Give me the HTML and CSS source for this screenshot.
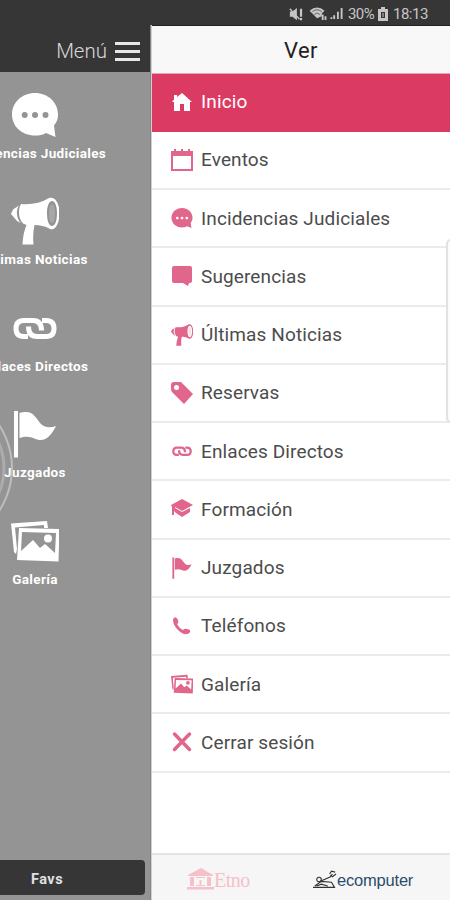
FILE: index.html
```html
<!DOCTYPE html>
<html lang="es">
<head>
<meta charset="utf-8">
<title>Menú</title>
<link rel="stylesheet" href="styles.css">
</head>
<body>
<svg class="sprite" aria-hidden="true">
  <symbol id="chat" viewBox="0 0 48 48"><path fill-rule="evenodd" d="M24 2C11 2 1 11.500 1 23.500S11 44.500 24 44.500C28 44.500 32 44 35 42L44.500 46L43 34.500C46 31 47 27.500 47 23.500C47 11.500 37 2 24 2ZM13.700 21a3 3 0 1 1 0 6a3 3 0 1 1 0-6ZM24 21a3 3 0 1 1 0 6a3 3 0 1 1 0-6ZM34.500 21a3 3 0 1 1 0 6a3 3 0 1 1 0-6Z"/></symbol>
  <symbol id="horn" viewBox="0 0 48 48"><path fill-rule="evenodd" d="M8 8.500C5 13 5 20 9.500 26L6 24L0 17L2 12.500ZM10 7C20 8 30 6 38 1C44-1 48.500 6 48.500 16C48.500 27 44 34 39 32C34 29 29 28 23.500 28Q21.500 37 22.500 47.500H11.500Q12 36 15.500 28L12 26.500C7 21 7 12 10 7ZM41 4C38 4 36 9 36 16C36 24 38 29 41 29C44 29 46 24 46 16C46 9 44 4 41 4Z"/><ellipse cx="41" cy="16.500" rx="3" ry="9.500" opacity=".18"/></symbol>
  <symbol id="link" viewBox="0 0 48 48"><g fill="none" stroke="currentColor" stroke-width="5"><path d="M17 32.500H13Q5 32.500 5 24.500Q5 16.500 13 16.500H22Q30.500 16.500 30.500 26.500"/><path d="M31 16.500H35Q43 16.500 43 24.500Q43 32.500 35 32.500H26Q17.500 32.500 17.500 22.500"/></g></symbol>
  <symbol id="flag" viewBox="0 0 48 48"><path d="M3 1H7V47.500H3ZM8.500 3C22-1 24 7 30 14C34 18 40 18 45 16C41 24 36 31 28 30C21 28 17 25 8.500 28Z"/></symbol>
  <symbol id="gallery" viewBox="0 0 48 48"><path fill-rule="evenodd" d="M0 6.500L36 4L37 11H33V8L4 10.500L6 32L5 37L3 35ZM8 11L48.500 12L47.500 44.500L6 43ZM11 15L10 34L22 23L29 31L34 27L44 36L45 16Z"/><circle cx="37" cy="21.500" r="4"/></symbol>
  <symbol id="home" viewBox="0 0 22 22"><path d="M1 11L3 8.500V4H6V6L11 2L21 11H19V20H13V13H9V20H3V11Z"/></symbol>
  <symbol id="calendar" viewBox="0 0 22 22"><path fill-rule="evenodd" d="M0 2H3V0H5V2H10V0H12V2H17V0H19V2H22V22H0ZM2 7V20H20V7Z"/></symbol>
  <symbol id="comment" viewBox="0 0 22 22"><path d="M3 1H19Q21 1 21 3V16Q21 18 19 18H18L17 21L12 18H3Q1 18 1 16V3Q1 1 3 1Z"/></symbol>
  <symbol id="tag" viewBox="0 0 22 22"><path fill-rule="evenodd" d="M3 0H10L22 12L13 22L1 10Q0 9 0 7V3Q0 0 3 0ZM5.500 3a2.500 2.500 0 1 0 0 5a2.500 2.500 0 1 0 0-5Z"/></symbol>
  <symbol id="cap" viewBox="0 0 22 22"><path d="M0 7L11 1L22 7L11 13L4 9V10L11 14L19 10V14L11 19L5 15L3 13V17H1V9Z"/></symbol>
  <symbol id="phone" viewBox="0 0 22 22"><path d="M3 3Q5 1 7 5Q8 8 6 9Q8 13 12 15Q14 13 16 14L19 15Q20 18 16 19Q12 20 7 15Q2 10 2 5Q2 4 3 3Z"/></symbol>
  <symbol id="cross" viewBox="0 0 22 22"><path d="M3.500 3L18.500 18.500M18.500 3L3.500 18.500" fill="none" stroke="currentColor" stroke-width="3.500" stroke-linecap="round"/></symbol>
</svg>
<div class="phone">
  <header class="status">
    <svg class="status-icon mute" viewBox="0 0 16 16"><path d="M1 5H4L9 1V15L4 11H1Z"/><path d="M1 2L12 14" stroke="currentColor" stroke-width="1.500"/><path d="M12.500 2H15V11H12.500ZM12.500 12.500H15V15H12.500Z"/></svg>
    <svg class="status-icon wifi" viewBox="0 0 18 16"><path d="M0 5Q8-2 16 5L13 8V11L8 13Z"/><path d="M3 6Q8 2 13 6M5 9Q8 6 11 9" fill="none" stroke="#363636" stroke-width=".7"/><path d="M13 9H15V15H13ZM16 11H18V15H16Z"/></svg>
    <svg class="status-icon signal" viewBox="0 0 13 14"><path d="M0 11H2V13H0ZM3 9H5V13H3ZM7 5H9V13H7ZM11 1H13V13H11Z"/></svg>
    <span class="percent">30%</span>
    <svg class="status-icon battery" viewBox="0 0 10 14"><path fill-rule="evenodd" d="M3 0H7V2H10V14H0V2H3ZM3 5V11H7V5Z"/><path d="M4.500 6H5.500V10H4.500Z"/></svg>
    <span class="clock">18:13</span>
  </header>
  <div class="body">
    <section class="home-page">
      <div class="home-bar"><span>Menú</span><span class="burger"><i></i><i></i><i></i></span></div>
      <div class="tiles">
        <div class="tile"><svg><use href="#chat"/></svg><span>Incidencias Judiciales</span></div>
        <div class="tile"><svg><use href="#horn"/></svg><span>Últimas Noticias</span></div>
        <div class="tile"><svg><use href="#link"/></svg><span>Enlaces Directos</span></div>
        <div class="tile"><svg><use href="#flag"/></svg><span>Juzgados</span></div>
        <div class="tile"><svg><use href="#gallery"/></svg><span>Galería</span></div>
      </div>
      <div class="favs"><span>Favs</span></div>
      <svg class="ripple" viewBox="0 0 14 90"><circle cx="-66" cy="45" r="78" stroke-width="2"/><circle cx="-57" cy="45" r="61" stroke-width="3" opacity=".6"/></svg>
    </section>
    <nav class="drawer">
      <h1 class="drawer-title">Ver</h1>
      <ul class="menu">
        <li class="active"><svg><use href="#home"/></svg><span>Inicio</span></li>
        <li><svg><use href="#calendar"/></svg><span>Eventos</span></li>
        <li><svg><use href="#chat"/></svg><span>Incidencias Judiciales</span></li>
        <li><svg><use href="#comment"/></svg><span>Sugerencias</span></li>
        <li><svg><use href="#horn"/></svg><span>Últimas Noticias</span></li>
        <li><svg><use href="#tag"/></svg><span>Reservas</span></li>
        <li><svg><use href="#link"/></svg><span>Enlaces Directos</span></li>
        <li><svg><use href="#cap"/></svg><span>Formación</span></li>
        <li><svg><use href="#flag"/></svg><span>Juzgados</span></li>
        <li><svg><use href="#phone"/></svg><span>Teléfonos</span></li>
        <li><svg><use href="#gallery"/></svg><span>Galería</span></li>
        <li><svg><use href="#cross"/></svg><span>Cerrar sesión</span></li>
      </ul>
      <footer class="brands">
        <div class="etno"><svg viewBox="0 0 27 22"><path fill-rule="evenodd" d="M1 7L14 0L26 7V8H1ZM3 9H7V18H3ZM20 9H24V18H20ZM9 9H18V10H9ZM9 17H18V18H9ZM12.500 12H14.500V17H12.500ZM0 19H27V21.500H0Z"/></svg><span>Etno</span></div>
        <div class="ecomputer"><svg viewBox="0 0 26 20"><g fill="none" stroke="#333" stroke-width="1.200"><path d="M0 18.500H24M2 17L9 12L20 13L23 18M4 17L9 15L16 17M8 12L19 7L21 4"/><circle cx="6.500" cy="10" r="2.500"/><path d="M18 4L20 1L24 2M19 5L21 7L25 4"/></g></svg><span>ecomputer</span></div>
      </footer>
      <div class="edge-handle"></div>
    </nav>
  </div>
</div>
</body>
</html>
```
FILE: styles.css
```css
* { box-sizing: border-box; }
body { margin: 0; font-family: Roboto, "Liberation Sans", sans-serif; }
svg { display: block; fill: currentColor; flex: none; }
.sprite { position: absolute; width: 0; height: 0; }
.phone { width: 450px; height: 900px; display: flex; flex-direction: column; overflow: hidden; background: #363636; }
.status { height: 25px; flex: none; display: flex; align-items: center; justify-content: flex-end; padding: 2px 22px 0 0; color: #c6c6c6; font-size: 15px; }
.mute { width: 16px; height: 14px; margin-right: 5px; }
.wifi { width: 18px; height: 15px; margin-right: 3px; }
.signal { width: 13px; height: 13px; margin-right: 5px; }
.battery { width: 10px; height: 14px; margin: 0 5px 0 4px; }
.percent { width: 26px; letter-spacing: -0.6px; }
.clock { width: 35px; letter-spacing: -0.5px; }
.body { flex: 1; min-height: 0; display: flex; }
.home-page { position: relative; width: 151px; flex: none; display: flex; flex-direction: column; overflow: hidden; background: #949494; border-right: 1px solid #858585; }
.home-bar { height: 47px; flex: none; display: flex; align-items: center; justify-content: flex-end; gap: 8px; padding: 5px 10px 0 0; background: #363636; color: #d8d8d8; font-size: 20.5px; font-weight: 300; }
.burger { width: 25px; display: flex; flex-direction: column; gap: 5px; }
.burger i { height: 3px; background: #e8e8e8; }
.tiles { flex: 1; padding-top: 19px; color: #fff; }
.tile { width: 70px; height: 106.4px; display: flex; flex-direction: column; align-items: center; gap: 6px; font-size: 13.5px; line-height: 16px; font-weight: 700; letter-spacing: 0.35px; white-space: nowrap; }
.tile svg { width: 48px; height: 48px; overflow: visible; }
.favs { width: 145px; height: 35px; flex: none; margin-bottom: 5px; display: flex; align-items: center; padding: 3px 0 0 31px; background: #363636; border-radius: 0 4px 4px 0; color: #e0e0e0; font-size: 14.5px; font-weight: 700; letter-spacing: 0.5px; }
.ripple { position: absolute; left: 0; top: 398px; width: 14px; height: 90px; }
.ripple circle { fill: none; stroke: #bdbdbd; }
.drawer { position: relative; flex: 1; display: flex; flex-direction: column; border-left: 1px solid #d0d0d0; background: #fff; }
.drawer-title { height: 48.5px; flex: none; margin: 0; display: flex; align-items: center; justify-content: center; padding-top: 3px; background: #f8f8f8; border-top: 1px solid #222; border-bottom: 1px solid #e1a7b5; color: #222; font-size: 22px; font-weight: 400; letter-spacing: 0.4px; }
.menu { flex: 1; margin: 0; padding: 0; list-style: none; }
.menu li { height: 58.25px; display: flex; align-items: center; gap: 8px; padding-left: 19px; border-bottom: 2px solid #ebebeb; color: #e0668c; }
.menu svg { width: 22px; height: 22px; overflow: visible; }
.menu span { color: #4c4c4c; font-size: 19px; letter-spacing: 0.12px; white-space: nowrap; }
.menu .active { background: #db3a62; border-color: #db3a62; color: #fff; }
.menu .active span { color: #fff; }
.brands { height: 47px; flex: none; display: flex; align-items: center; padding: 3px 0 0 35px; background: #f6f6f6; border-top: 2px solid #e5e5e5; }
.etno, .ecomputer { display: flex; align-items: flex-end; }
.etno { width: 126px; color: #f5c0ca; font-family: "Liberation Serif", serif; font-size: 20px; line-height: 20px; letter-spacing: -0.5px; }
.etno svg { width: 27px; height: 22px; }
.ecomputer { color: #2b4c6f; font-family: "Liberation Sans", sans-serif; font-size: 16.5px; line-height: 18px; letter-spacing: -0.2px; }
.ecomputer svg { width: 24px; height: 19px; }
.edge-handle { position: absolute; right: -6px; top: 214px; width: 10px; height: 184px; background: #fbfbfb; border: 2px solid #e2e2e2; border-radius: 6px; clip-path: inset(0 6px 0 0); }
```
